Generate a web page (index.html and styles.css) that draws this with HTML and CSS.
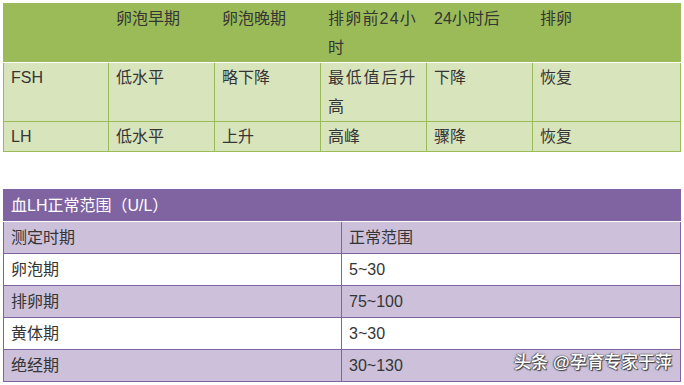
FILE: index.html
```html
<!DOCTYPE html>
<html lang="zh-CN">
<head>
<meta charset="utf-8">
<title>FSH LH</title>
<link rel="stylesheet" href="styles.css">
</head>
<body>
<div class="page">
  <table class="tbl green">
    <colgroup>
      <col class="c1"><col class="c2"><col class="c3"><col class="c4"><col class="c5"><col class="c6">
    </colgroup>
    <thead>
      <tr><th></th><th>卵泡早期</th><th>卵泡晚期</th><th class="sp-h">排卵前24小时</th><th>24小时后</th><th>排卵</th></tr>
    </thead>
    <tbody>
      <tr><td>FSH</td><td>低水平</td><td>略下降</td><td class="sp-b">最低值后升高</td><td>下降</td><td>恢复</td></tr>
      <tr><td>LH</td><td>低水平</td><td>上升</td><td>高峰</td><td>骤降</td><td>恢复</td></tr>
    </tbody>
  </table>

  <div class="wrap">
    <table class="tbl purple">
      <colgroup><col class="p1"><col class="p2"></colgroup>
      <thead>
        <tr><th colspan="2">血LH正常范围（U/L）</th></tr>
      </thead>
      <tbody>
        <tr class="alt"><td>测定时期</td><td>正常范围</td></tr>
        <tr><td>卵泡期</td><td>5~30</td></tr>
        <tr class="alt"><td>排卵期</td><td>75~100</td></tr>
        <tr><td>黄体期</td><td>3~30</td></tr>
        <tr class="alt"><td>绝经期</td><td>30~130</td></tr>
      </tbody>
    </table>
    <div class="mark">头条 @孕育专家于萍</div>
  </div>
</div>
</body>
</html>
```

FILE: styles.css
```css
html, body {
  margin: 0;
  padding: 0;
  background: #fff;
}
.page {
  padding: 3px 4px 0 3px;
  font-family: "Liberation Sans", "Noto Sans CJK SC", sans-serif;
  font-size: 16px;
  color: #353535;
}
.tbl {
  border-collapse: collapse;
  table-layout: fixed;
  width: 677px;
}
.tbl th, .tbl td {
  font-weight: normal;
  text-align: left;
  vertical-align: top;
  padding: 0 8px 0 7px;
}
.green th, .green td {
  line-height: 29px;
  border: 1px solid #9bbb59;
}
.green th {
  background: #9bbb59;
  border-bottom: 1px solid #ffffff;
}
.green td {
  background: #d8e4bc;
}
.sp-h {
  letter-spacing: 1.2px;
}
.sp-b {
  letter-spacing: 1.8px;
}
.c1 { width: 105px; }
.c2 { width: 106px; }
.c3 { width: 106px; }
.c4 { width: 106px; }
.c5 { width: 106px; }
.c6 { width: 148px; }

.wrap {
  position: relative;
  margin-top: 37px;
  width: 677px;
}
.purple th, .purple td {
  line-height: 31px;
  border: 1px solid #8064a2;
}
.purple th {
  background: #8064a2;
  color: #ffffff;
  border-bottom: 1px solid #ffffff;
}
.purple td {
  background: #ffffff;
}
.purple tr.alt td {
  background: #ccc0da;
}
.p1 { width: 338px; }
.p2 { width: 339px; }
.mark {
  position: absolute;
  right: 8px;
  bottom: 9px;
  font-size: 17px;
  line-height: 20px;
  font-weight: 500;
  color: #ffffff;
  text-shadow: 1px 1px 1px #3a3a3a, 0 0 2px #444, -1px 0 1px #666;
  white-space: nowrap;
}
```
